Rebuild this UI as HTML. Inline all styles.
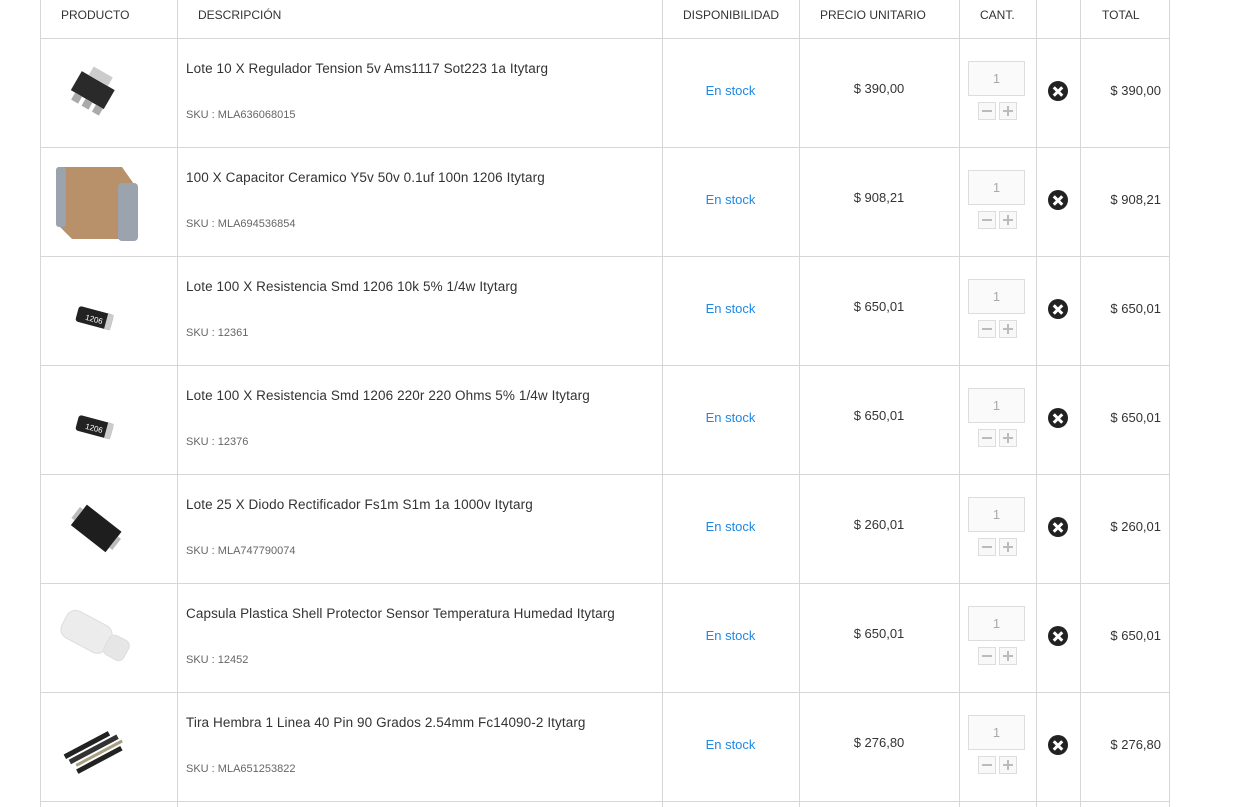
<!DOCTYPE html>
<html><head><meta charset="utf-8">
<style>
body{margin:0;width:1233px;height:807px;background:#fff;overflow:hidden;font-family:"Liberation Sans",sans-serif;color:#333;position:relative}
.v{position:absolute;top:0;height:807px;width:1px;background:#d6d6d6}
.h{position:absolute;left:40px;width:1130px;height:1px;background:#d6d6d6}
.hd{position:absolute;top:8px;font-size:12px;color:#333;white-space:nowrap}
.r{position:absolute;left:0;width:1233px;height:109px}
.d{position:absolute;left:186px;top:23px;font-size:13.5px;color:#333;white-space:nowrap;letter-spacing:0.1px}
.s{position:absolute;left:186px;top:71px;font-size:11px;color:#666}
.st{position:absolute;left:662px;width:137px;text-align:center;top:45px;font-size:13px;color:#1e88e5}
.p{position:absolute;left:799px;width:160px;text-align:center;top:43px;font-size:13px}
.q{position:absolute;left:968px;top:23px;width:55px;height:33px;border:1px solid #ddd;background:#fafafa;text-align:center;line-height:33px;font-size:13px;color:#aaa}
.b{position:absolute;top:64px;width:16px;height:16px;border:1px solid #ddd;background:#f8f8f8}
.b.m{left:978px}.b.pl{left:999px}
.b::before{content:"";position:absolute;left:3px;top:7px;width:10px;height:2px;background:#bbb}
.b.pl::after{content:"";position:absolute;left:7px;top:3px;width:2px;height:10px;background:#bbb}
.x{position:absolute;left:1048px;top:43px;width:20px;height:20px;border-radius:50%;background:#222}
.x::before,.x::after{content:"";position:absolute;left:4px;top:8.5px;width:12px;height:3px;background:#fff;transform:rotate(45deg)}
.x::after{transform:rotate(-45deg)}
.t{position:absolute;left:1080px;width:81px;text-align:right;top:45px;font-size:13px}
.img{position:absolute;left:48px;top:8px;width:92px;height:92px}
</style></head><body>
<div class="v" style="left:40px"></div><div class="v" style="left:177px"></div><div class="v" style="left:662px"></div><div class="v" style="left:799px"></div><div class="v" style="left:959px"></div><div class="v" style="left:1036px"></div><div class="v" style="left:1080px"></div><div class="v" style="left:1169px"></div>
<div class="h" style="top:38px"></div><div class="h" style="top:147px"></div><div class="h" style="top:256px"></div><div class="h" style="top:365px"></div><div class="h" style="top:474px"></div><div class="h" style="top:583px"></div><div class="h" style="top:692px"></div><div class="h" style="top:801px"></div>
<div class="hd" style="left:61px">PRODUCTO</div>
<div class="hd" style="left:198px">DESCRIPCIÓN</div>
<div class="hd" style="left:683px">DISPONIBILIDAD</div>
<div class="hd" style="left:820px">PRECIO UNITARIO</div>
<div class="hd" style="left:980px">CANT.</div>
<div class="hd" style="left:1102px">TOTAL</div>

<div class="r" style="top:38px">
<svg class="img" viewBox="0 0 92 92"><g transform="rotate(30 46 46)"><rect x="25" y="34" width="38" height="22" fill="#2a2a2a"/><rect x="30" y="56" width="8" height="8" fill="#aaa"/><rect x="42" y="56" width="8" height="8" fill="#aaa"/><rect x="54" y="56" width="8" height="8" fill="#aaa"/><rect x="33" y="24" width="22" height="10" fill="#ccc"/></g></svg>
<div class="d">Lote 10 X Regulador Tension 5v Ams1117 Sot223 1a Itytarg</div><div class="s">SKU : MLA636068015</div>
<div class="st">En stock</div><div class="p">$ 390,00</div><div class="q">1</div><div class="b m"></div><div class="b pl"></div><div class="x"></div><div class="t">$ 390,00</div></div>

<div class="r" style="top:147px">
<svg class="img" style="left:52px;top:12px" viewBox="0 0 92 92"><path d="M6 8 L70 8 L84 28 L84 80 L20 80 L6 66Z" fill="#b8916a"/><rect x="4" y="8" width="10" height="60" rx="3" fill="#9aa3ae"/><rect x="66" y="24" width="20" height="58" rx="4" fill="#9aa3ae"/></svg>
<div class="d">100 X Capacitor Ceramico Y5v 50v 0.1uf 100n 1206 Itytarg</div><div class="s">SKU : MLA694536854</div>
<div class="st">En stock</div><div class="p">$ 908,21</div><div class="q">1</div><div class="b m"></div><div class="b pl"></div><div class="x"></div><div class="t">$ 908,21</div></div>

<div class="r" style="top:256px">
<svg class="img" viewBox="0 0 92 92"><g transform="rotate(15 46 56)"><rect x="28" y="46" width="36" height="16" rx="3" fill="#222"/><rect x="58" y="46" width="6" height="16" fill="#ccc"/><text x="37" y="58" font-size="8" fill="#fff" font-family="Liberation Sans">1206</text></g></svg>
<div class="d">Lote 100 X Resistencia Smd 1206 10k 5% 1/4w Itytarg</div><div class="s">SKU : 12361</div>
<div class="st">En stock</div><div class="p">$ 650,01</div><div class="q">1</div><div class="b m"></div><div class="b pl"></div><div class="x"></div><div class="t">$ 650,01</div></div>

<div class="r" style="top:365px">
<svg class="img" viewBox="0 0 92 92"><g transform="rotate(15 46 56)"><rect x="28" y="46" width="36" height="16" rx="3" fill="#222"/><rect x="58" y="46" width="6" height="16" fill="#ccc"/><text x="37" y="58" font-size="8" fill="#fff" font-family="Liberation Sans">1206</text></g></svg>
<div class="d">Lote 100 X Resistencia Smd 1206 220r 220 Ohms 5% 1/4w Itytarg</div><div class="s">SKU : 12376</div>
<div class="st">En stock</div><div class="p">$ 650,01</div><div class="q">1</div><div class="b m"></div><div class="b pl"></div><div class="x"></div><div class="t">$ 650,01</div></div>

<div class="r" style="top:474px">
<svg class="img" viewBox="0 0 92 92"><g transform="rotate(38 46 46)"><rect x="26" y="32" width="44" height="26" fill="#1e1e1e"/><rect x="22" y="38" width="4" height="14" fill="#bbb"/><rect x="70" y="38" width="4" height="14" fill="#bbb"/></g></svg>
<div class="d">Lote 25 X Diodo Rectificador Fs1m S1m 1a 1000v Itytarg</div><div class="s">SKU : MLA747790074</div>
<div class="st">En stock</div><div class="p">$ 260,01</div><div class="q">1</div><div class="b m"></div><div class="b pl"></div><div class="x"></div><div class="t">$ 260,01</div></div>

<div class="r" style="top:583px">
<svg class="img" viewBox="0 0 92 92"><g transform="rotate(28 46 46)"><rect x="12" y="30" width="50" height="30" rx="10" fill="#ececec" stroke="#ddd"/><rect x="60" y="34" width="22" height="22" rx="6" fill="#e6e6e6" stroke="#ddd"/></g></svg>
<div class="d">Capsula Plastica Shell Protector Sensor Temperatura Humedad Itytarg</div><div class="s">SKU : 12452</div>
<div class="st">En stock</div><div class="p">$ 650,01</div><div class="q">1</div><div class="b m"></div><div class="b pl"></div><div class="x"></div><div class="t">$ 650,01</div></div>

<div class="r" style="top:692px">
<svg class="img" viewBox="0 0 92 92"><g transform="rotate(-28 46 52)"><rect x="18" y="40" width="50" height="5" fill="#222"/><rect x="20" y="47" width="54" height="5" fill="#333"/><rect x="24" y="54" width="52" height="3" fill="#a89f80"/><rect x="22" y="59" width="50" height="5" fill="#222"/></g></svg>
<div class="d">Tira Hembra 1 Linea 40 Pin 90 Grados 2.54mm Fc14090-2 Itytarg</div><div class="s">SKU : MLA651253822</div>
<div class="st">En stock</div><div class="p">$ 276,80</div><div class="q">1</div><div class="b m"></div><div class="b pl"></div><div class="x"></div><div class="t">$ 276,80</div></div>
</body></html>
